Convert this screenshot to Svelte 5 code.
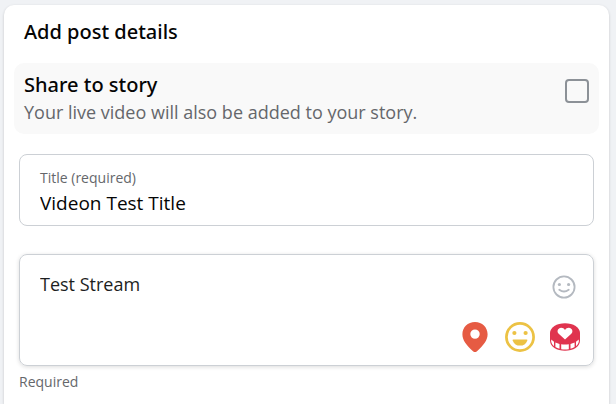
<script lang="ts">
	let shareToStory = $state(false);
	let title = $state("Videon Test Title");
	let description = $state("Test Stream");
</script>

<main class="page">
	<section class="card">
		<h2>Add post details</h2>

		<div class="share">
			<label for="share-story">
				<span class="share-title">Share to story</span>
				<span class="share-hint">Your live video will also be added to your story.</span>
			</label>
			<input id="share-story" type="checkbox" bind:checked={shareToStory} />
		</div>

		<div class="field title-field">
			<label for="post-title">Title (required)</label>
			<input id="post-title" type="text" bind:value={title} />
		</div>

		<div class="field description-field">
			<div class="description-row">
				<textarea
					aria-label="Description"
					aria-describedby="description-note"
					rows="2"
					bind:value={description}
				></textarea>
				<button type="button" class="emoji" aria-label="Insert an emoji">
					<svg width="24" height="24" viewBox="0 0 24 24" fill="none">
						<circle cx="12" cy="12" r="10.6" stroke="#b4b9c0" stroke-width="1.8" />
						<circle cx="7.4" cy="9.5" r="1.6" fill="#b4b9c0" />
						<circle cx="16.6" cy="9.5" r="1.6" fill="#b4b9c0" />
						<path d="M7.3 14.8Q12 18.2 16.7 14.8" stroke="#b4b9c0" stroke-width="1.9" stroke-linecap="round" />
					</svg>
				</button>
			</div>
			<div class="tools">
				<button type="button" aria-label="Check in">
					<svg width="30" height="30" viewBox="0 0 30 30">
						<path
							d="M15 0C7.8 0 2.4 5.3 2.4 12.2C2.4 18 6.3 23.3 13.3 29.4Q15 30.6 16.7 29.4C23.7 23.3 27.6 18 27.6 12.2C27.6 5.3 22.2 0 15 0ZM15 7.4A4.7 4.7 0 1 1 15 16.8A4.7 4.7 0 1 1 15 7.4Z"
							fill="#e65b43"
							fill-rule="evenodd"
						/>
					</svg>
				</button>
				<button type="button" aria-label="Feeling or activity">
					<svg width="30" height="30" viewBox="0 0 30 30" fill="none">
						<circle cx="15" cy="15" r="13.6" stroke="#ecc244" stroke-width="2.7" />
						<circle cx="9.4" cy="11" r="2.1" fill="#ecc244" />
						<circle cx="20.6" cy="11" r="2.1" fill="#ecc244" />
						<path d="M8.3 17.4H21.7Q22.6 17.4 22.3 18.4C21.2 21.9 18.4 23.6 15 23.6C11.6 23.6 8.8 21.9 7.7 18.4Q7.4 17.4 8.3 17.4Z" fill="#ecc244" />
					</svg>
				</button>
				<button type="button" aria-label="Raise money">
					<svg width="30" height="30" viewBox="0 0 30 30">
						<path d="M0 11C0 5.4 6.7 1.2 15 1.2S30 5.4 30 11V18.5C30 24.6 23.3 28.8 15 28.8S0 24.6 0 18.5Z" fill="#e0344f" />
						<path d="M15 17.6L8.7 11.7C6.7 9.8 7.4 6.5 10.4 5.9C12.3 5.6 14 6.4 15 8C16 6.4 17.7 5.6 19.6 5.9C22.6 6.5 23.3 9.8 21.3 11.7Z" fill="white" />
						<path d="M1.2 17.4L4 19.7V24.2Q1.5 22.2 1.2 19.8ZM5.4 20.6L9.5 22V26.7Q7.2 26 5.4 25ZM11.2 22.3Q15 22.9 18.8 22.3V27.2Q15 27.8 11.2 27.2ZM20.5 22L24.6 20.6V25Q22.8 26 20.5 26.7ZM26 19.7L28.8 17.4V19.8Q28.5 22.2 26 24.2Z" fill="white" />
					</svg>
				</button>
			</div>
		</div>
		<p id="description-note">Required</p>
	</section>
</main>

<style>
	:global(body) {
		margin: 0;
		background: #f0f2f5;
	}

	.page {
		box-sizing: border-box;
		min-height: 100vh;
		padding: 5px 7px 0 4px;
		display: flex;
		font-family: "Segoe UI", "Open Sans", "Noto Sans", sans-serif;
		color: #050505;
	}

	.card {
		flex: 1;
		min-width: 0;
		padding: 12px 10px 8px;
		border-radius: 10px 10px 0 0;
		background: white;
		box-shadow: 0 1px 3px rgba(0, 0, 0, 0.18);
	}

	h2,
	.share-title {
		font-family: "Segoe UI", "Noto Sans", "Open Sans", sans-serif;
		font-size: 20px;
		font-weight: 500;
	}

	h2 {
		margin: 0 10px 16px;
		line-height: 30px;
	}

	.share {
		display: flex;
		justify-content: space-between;
		align-items: flex-start;
		padding: 8px 10px;
		border-radius: 10px;
		background: #f9f9f9;
	}

	.share label {
		display: flex;
		flex-direction: column;
	}

	.share-title {
		line-height: 28px;
	}

	.share-hint {
		font-size: 18px;
		line-height: 27px;
		color: #65676b;
	}

	.share input {
		appearance: none;
		flex: none;
		box-sizing: border-box;
		width: 24px;
		height: 24px;
		margin: 8px 0 0;
		border: 2px solid #8c9197;
		border-radius: 4px;
	}

	.share input:checked {
		background: #1877f2;
		border-color: #1877f2;
	}

	.field {
		margin: 0 5px;
		border: 1px solid #ccd0d5;
		border-radius: 8px;
	}

	.title-field {
		display: flex;
		flex-direction: column;
		margin-top: 20px;
		padding: 12px 20px 8px;
	}

	.title-field label {
		font-size: 14px;
		line-height: 22px;
		color: #65676b;
	}

	.field input,
	textarea {
		min-width: 0;
		margin: 0;
		padding: 0;
		border: 0;
		outline: 0;
		background: none;
		font-family: inherit;
		font-size: 19px;
		line-height: 28px;
		color: inherit;
	}

	.field input {
		height: 28px;
	}

	.description-field {
		margin-top: 28px;
		padding: 15px 13px 13px 20px;
		box-shadow: 0 1px 4px rgba(0, 0, 0, 0.14);
	}

	.description-row {
		display: flex;
		align-items: flex-start;
		height: 52px;
	}

	textarea {
		flex: 1;
		height: 52px;
		resize: none;
		font-size: 18px;
		color: #1c1e21;
	}

	button {
		display: block;
		padding: 0;
		border: 0;
		background: none;
		cursor: pointer;
	}

	button svg {
		display: block;
	}

	.emoji {
		margin: 5px 4px 0 0;
	}

	.tools {
		display: flex;
		justify-content: flex-end;
		gap: 15px;
	}

	p {
		margin: 4px 5px 0;
		font-size: 14px;
		line-height: 24px;
		color: #65676b;
	}
</style>
